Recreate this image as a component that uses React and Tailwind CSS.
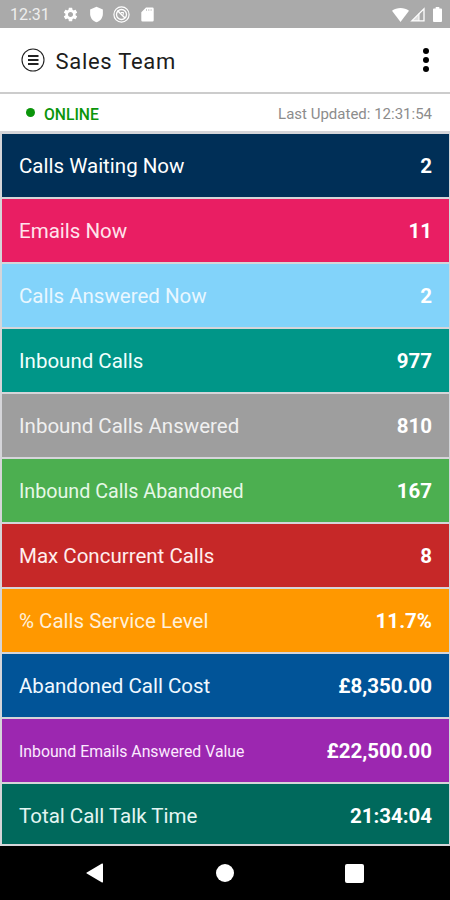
import React from "react";
import { MdSettings, MdShield } from "react-icons/md";

const rows = [
  { label: "Calls Waiting Now", value: "2", color: "bg-[#002f57]", text: "text-white" },
  { label: "Emails Now", value: "11", color: "bg-[#e91e63]", text: "text-[#ffe3ec]" },
  { label: "Calls Answered Now", value: "2", color: "bg-[#82d3fa]", text: "text-[#e9f7ff]" },
  { label: "Inbound Calls", value: "977", color: "bg-[#009688]", text: "text-[#f0fffd]" },
  { label: "Inbound Calls Answered", value: "810", color: "bg-[#9e9e9e]", text: "text-[#f0f0f0]" },
  { label: "Inbound Calls Abandoned", value: "167", color: "bg-[#4caf50]", text: "text-[#e6f8e7]", size: "text-[19.700px]" },
  { label: "Max Concurrent Calls", value: "8", color: "bg-[#c62828]", text: "text-[#ffeeee]" },
  { label: "% Calls Service Level", value: "11.7%", color: "bg-[#ff9800]", text: "text-[#fff0da]" },
  { label: "Abandoned Call Cost", value: "£8,350.00", color: "bg-[#015498]", text: "text-[#f0f8ff]" },
  { label: "Inbound Emails Answered Value", value: "£22,500.00", color: "bg-[#9c27b0]", text: "text-[#fbeaff]", size: "text-[15.800px]" },
  { label: "Total Call Talk Time", value: "21:34:04", color: "bg-[#00695c]", text: "text-[#e3f5f2]" },
];

function StatusBar() {
  return (
    <div className="flex h-7 shrink-0 items-center justify-between bg-[#aaaaaa] pl-[10px] pr-[8px] pt-px text-white">
      <div className="flex items-center">
        <span className="w-[52px] pt-px text-[16px] leading-none text-[#eeeeee]">12:31</span>
        <MdSettings className="size-[17px]" />
        <MdShield className="ml-[9px] size-[17px]" />
        <svg className="ml-[8px] size-[17px]" viewBox="0 0 17 17" fill="none" stroke="currentColor">
          <circle cx="8.5" cy="8.5" r="7.600" strokeWidth="1.200" />
          <circle cx="8.5" cy="8.5" r="5" strokeWidth="1.300" />
          <path d="M4.500 4.500l7.500 7.500" strokeWidth="1.500" />
          <path d="M8 6.500h2.300v2.300" strokeWidth="1.100" />
        </svg>
        <svg className="ml-[11px] h-[15px] w-[13px]" viewBox="0 0 13 15" fill="currentColor">
          <path d="M5 .5h6.5A1.2 1.2 0 0 1 12.700 1.700v11.600a1.200 1.200 0 0 1-1.200 1.200h-10A1.200 1.200 0 0 1 .3 13.300V5.200z" />
          <path d="M5.500 2v2M7.800 2v2M10.100 2v2" stroke="#aaaaaa" strokeWidth=".6" />
        </svg>
      </div>
      <div className="flex items-center">
        <svg className="h-[14px] w-[17px]" viewBox="0 0 17 14" fill="currentColor">
          <path d="M0 2.800C4.800-.8 12.200-.8 17 2.800L8.500 14z" />
        </svg>
        <svg className="ml-[1px] h-[15px] w-[15px]" viewBox="0 0 15 15">
          <path d="M1.800 13.900L14 1.800v12.100z" fill="none" stroke="white" strokeWidth="1.300" />
          <path d="M9 7v7H2z" fill="white" fillOpacity=".6" />
          <path d="M9 6.500V14" stroke="white" strokeWidth="1" />
        </svg>
        <svg className="ml-[8px] h-[15px] w-[9px]" viewBox="0 0 10 15" preserveAspectRatio="none" fill="currentColor">
          <path d="M3 0h4v1.500h2A1 1 0 0 1 10 2.500V14a1 1 0 0 1-1 1H1a1 1 0 0 1-1-1V2.500a1 1 0 0 1 1-1h2z" />
        </svg>
      </div>
    </div>
  );
}

function Header() {
  return (
    <header className="flex h-[66px] shrink-0 items-center border-b-2 border-[#cccccc] pl-[21px] pr-[21px]">
      <svg className="size-6" viewBox="0 0 24 24" fill="none" stroke="#222222">
        <circle cx="12" cy="12" r="11" strokeWidth="1.100" />
        <path d="M7 8h10.500M7 12h10.500M7 16h10.500" strokeWidth="2.200" />
      </svg>
      <h1 className="ml-[10.500px] mt-[4px] text-[22px] leading-none tracking-[0.7px] text-[#1c1c1c]">Sales Team</h1>
      <div className="ml-auto flex flex-col gap-[3px]">
        <span className="size-[6px] rounded-full bg-black" />
        <span className="size-[6px] rounded-full bg-black" />
        <span className="size-[6px] rounded-full bg-black" />
      </div>
    </header>
  );
}

export default function App() {
  return (
    <div className="flex h-[900px] w-[450px] flex-col overflow-hidden bg-white font-['Roboto',sans-serif]">
      <StatusBar />
      <Header />

      {/* Connection state */}
      <div className="flex h-[37px] shrink-0 items-center pl-[26px] pr-[18px]">
        <span className="size-[9px] rounded-full bg-[#0b950b]" />
        <span className="ml-[9px] pt-[4px] text-[15.700px] font-medium text-[#0b950b]">ONLINE</span>
        <span className="ml-auto pt-[3px] text-[15px] text-[#8c8c8c]">Last Updated: 12:31:54</span>
      </div>

      {/* Wallboard tiles */}
      <main className="flex h-[715px] shrink-0 flex-col gap-[2px] bg-[#d5d5d9] pb-[2px] pl-[2px] pr-[1px] pt-[3px]">
        {rows.map(row => (
          <div
            key={row.label}
            className={`flex h-[63px] items-center justify-between pl-[17px] pr-[17px] pt-[2px] last:h-[60px] last:pt-[5px] ${row.color} ${row.text}`}
          >
            <span className={row.size || "text-[20.500px]"}>{row.label}</span>
            <span className="text-[20.500px] font-bold text-white">{row.value}</span>
          </div>
        ))}
      </main>

      {/* Android navigation */}
      <nav className="flex h-[54px] shrink-0 items-center bg-black pl-[86px]">
        <svg className="h-[20px] w-[18px]" viewBox="0 0 18 20" fill="white">
          <path d="M16 .5c.6-.3 1 0 1 .7v17.600c0 .7-.4 1-1 .7L.8 10.600a.7.7 0 0 1 0-1.200z" />
        </svg>
        <span className="ml-[112px] size-[18px] rounded-full bg-white" />
        <span className="ml-[111px] size-[19px] rounded-[2px] bg-white" />
      </nav>
    </div>
  );
}
